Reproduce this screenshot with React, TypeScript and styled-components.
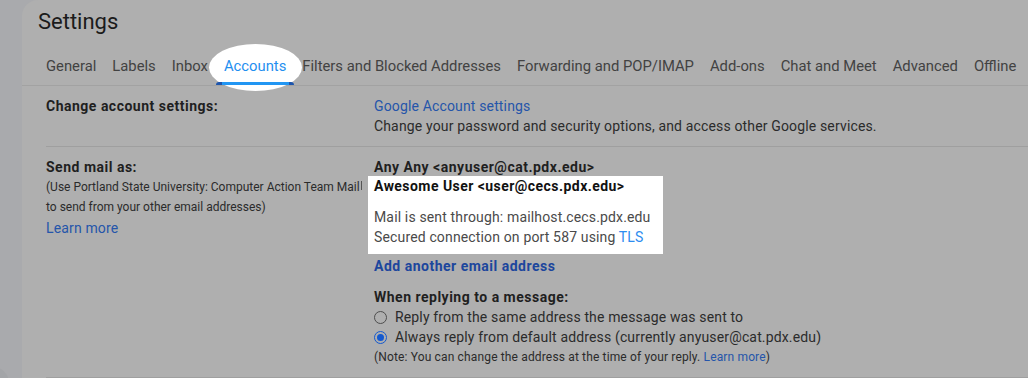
import React from "react";
import styled, { createGlobalStyle } from "styled-components";

const GlobalStyle = createGlobalStyle`
  html, body { margin: 0; padding: 0; }
  body {
    background: #a9aaad;
    font-family: Roboto, "Liberation Sans", Arial, sans-serif;
    overflow: hidden;
  }
`;

const Page = styled.div`
  display: flex;
  width: 1028px;
  height: 378px;
  overflow: hidden;
`;

const Rail = styled.div`
  width: 22px;
  flex: none;
  display: flex;
  flex-direction: column;
  justify-content: flex-end;
`;

const RailButton = styled.div`
  width: 32px;
  height: 32px;
  border-radius: 50%;
  background: #a3a5a8;
  margin-left: -23px;
  margin-bottom: -21px;
`;

const Panel = styled.div`
  flex: 1;
  min-width: 0;
  background: #afafaf;
  border-top-left-radius: 16px;
  overflow: hidden;
`;

const Title = styled.h1`
  margin: 0;
  padding: 8px 0 0 16px;
  font-size: 22px;
  line-height: 28px;
  font-weight: 400;
  color: #1b1b1b;
`;

const TabBar = styled.nav`
  display: flex;
  margin-top: 11px;
  padding-left: 16px;
  border-bottom: 1px solid #a2a2a2;
  white-space: nowrap;
`;

const Tab = styled.div<{ $active?: boolean }>`
  position: relative;
  padding: 0 8px;
  height: 38px;
  line-height: 38px;
  font-size: 14.8px;
  color: ${(p) => (p.$active ? "#1f8ff0" : "#424242")};
  z-index: ${(p) => (p.$active ? 1 : 0)};

  ${(p) =>
    p.$active &&
    `
    &::before {
      content: "";
      position: absolute;
      left: -7px;
      right: -8px;
      top: -3px;
      height: 47px;
      border-radius: 50%;
      background: #ffffff;
      z-index: -1;
    }
    &::after {
      content: "";
      position: absolute;
      left: 0;
      right: 0;
      bottom: 0;
      height: 3px;
      border-radius: 3px 3px 0 0;
      background: linear-gradient(to right, #1d55ad 0 6px, #2196f3 6px calc(100% - 5px), #1d55ad calc(100% - 5px));
    }
  `}
`;

const Content = styled.div`
  padding-left: 24px;
  letter-spacing: 0.15px;
`;

const Row = styled.section`
  display: grid;
  grid-template-columns: 328px 1fr;
  padding: 10px 0;
  border-bottom: 1px solid #9f9f9f;
`;

const Label = styled.div`
  font-size: 14px;
  line-height: 20px;
  font-weight: 700;
  letter-spacing: 0.5px;
  color: #1f1f1f;
`;

const Desc = styled.div`
  font-size: 12px;
  line-height: 20px;
  letter-spacing: 0;
  color: #2b2b2b;
`;

const Link = styled.a<{ $bold?: boolean; $size?: number; $tight?: boolean }>`
  display: ${(p) => (p.$tight ? "inline" : "block")};
  font-size: ${(p) => p.$size ?? 14}px;
  line-height: 20px;
  font-weight: ${(p) => (p.$bold ? 700 : 400)};
  letter-spacing: ${(p) => (p.$bold ? "0.5px" : "inherit")};
  color: ${(p) => (p.$bold ? "#1c469d" : "#2555aa")};
  text-decoration: none;
`;

const LearnMore = styled(Link)`
  margin-top: 1px;
`;

const Text = styled.div`
  font-size: 14px;
  line-height: 20px;
  color: #2b2b2b;
`;

const Highlight = styled.div`
  position: relative;
  width: 289px;
  margin-left: -6px;
  margin-top: -1px;
  padding: 0 0 7px 6px;
  background: #ffffff;

  &::before {
    content: "";
    position: absolute;
    left: -7px;
    top: 5px;
    width: 1px;
    height: 9px;
    background: #555;
  }
`;

const HiName = styled(Label)`
  letter-spacing: 0.45px;
  color: #111111;
  margin-bottom: 11px;
`;

const HiText = styled.div`
  font-size: 14px;
  line-height: 20px;
  color: #4a4a4a;
`;

const Tls = styled.span`
  color: #2d8cf0;
`;

const AddLink = styled(Link)`
  margin-top: 2px;
`;

const SubHead = styled(Label)`
  margin-top: 11px;
`;

const RadioRow = styled.label`
  display: flex;
  align-items: center;
  gap: 8px;
  font-size: 14px;
  line-height: 20px;
  color: #2b2b2b;
`;

const Radio = styled.span<{ $checked?: boolean }>`
  position: relative;
  width: 13px;
  height: 13px;
  box-sizing: border-box;
  border-radius: 50%;
  border: 1.5px solid ${(p) => (p.$checked ? "#1459cf" : "#4e4e4e")};
  flex: none;

  ${(p) =>
    p.$checked &&
    `
    &::after {
      content: "";
      position: absolute;
      inset: 2px;
      border-radius: 50%;
      background: #1459cf;
    }
  `}
`;

const Note = styled.div`
  font-size: 12px;
  line-height: 20px;
  color: #2b2b2b;
`;

const tabs = [
  "General",
  "Labels",
  "Inbox",
  "Accounts",
  "Filters and Blocked Addresses",
  "Forwarding and POP/IMAP",
  "Add-ons",
  "Chat and Meet",
  "Advanced",
  "Offline",
];

export default function App() {
  return (
    <>
      <GlobalStyle />
      <Page>
        <Rail>
          <RailButton />
        </Rail>
        <Panel>
          <Title>Settings</Title>
          <TabBar>
            {tabs.map((t) => (
              <Tab key={t} $active={t === "Accounts"}>
                {t}
              </Tab>
            ))}
          </TabBar>
          <Content>
            <Row>
              <Label>Change account settings:</Label>
              <div>
                <Link href="#">Google Account settings</Link>
                <Text>
                  Change your password and security options, and access other Google services.
                </Text>
              </div>
            </Row>
            <Row>
              <div>
                <Label>Send mail as:</Label>
                <Desc>
                  (Use Portland State University: Computer Action Team Mail
                  <br />
                  to send from your other email addresses)
                </Desc>
                <LearnMore href="#">Learn more</LearnMore>
              </div>
              <div>
                <Label>Any Any &lt;anyuser@cat.pdx.edu&gt;</Label>
                <Highlight>
                  <HiName>Awesome User &lt;user@cecs.pdx.edu&gt;</HiName>
                  <HiText>Mail is sent through: mailhost.cecs.pdx.edu</HiText>
                  <HiText>
                    Secured connection on port 587 using <Tls>TLS</Tls>
                  </HiText>
                </Highlight>
                <AddLink href="#" $bold>
                  Add another email address
                </AddLink>
                <SubHead>When replying to a message:</SubHead>
                <RadioRow>
                  <Radio />
                  Reply from the same address the message was sent to
                </RadioRow>
                <RadioRow>
                  <Radio $checked />
                  Always reply from default address (currently anyuser@cat.pdx.edu)
                </RadioRow>
                <Note>
                  (Note: You can change the address at the time of your reply.{" "}
                  <Link href="#" $size={12} $tight>
                    Learn more
                  </Link>
                  )
                </Note>
              </div>
            </Row>
          </Content>
        </Panel>
      </Page>
    </>
  );
}
